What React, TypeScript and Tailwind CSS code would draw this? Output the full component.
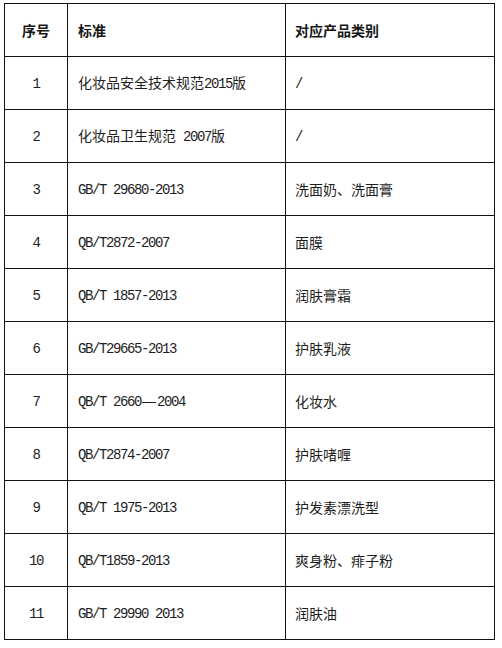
const ROWS: Array<[string, string, string]> = [
  ['1', '化妆品安全技术规范2015版', '/'],
  ['2', '化妆品卫生规范 2007版', '/'],
  ['3', 'GB/T 29680-2013', '洗面奶、洗面膏'],
  ['4', 'QB/T2872-2007', '面膜'],
  ['5', 'QB/T 1857-2013', '润肤膏霜'],
  ['6', 'GB/T29665-2013', '护肤乳液'],
  ['7', 'QB/T 2660—2004', '化妆水'],
  ['8', 'QB/T2874-2007', '护肤啫喱'],
  ['9', 'QB/T 1975-2013', '护发素漂洗型'],
  ['10', 'QB/T1859-2013', '爽身粉、痱子粉'],
  ['11', 'GB/T 29990 2013', '润肤油'],
];

// ascii runs get the narrow mono face, dashes a full em, the rest the CJK face
function Mixed({ text }: { text: string }) {
  const parts = text.match(/[\x00-\x7F]+|—+|[^\x00-\x7F—]+/g) ?? [];
  return (
    <span className="whitespace-pre">
      {parts.map((p, i) => {
        if (/^[\x00-\x7F]+$/.test(p))
          return (
            <span key={i} className="font-['Liberation_Mono',monospace] tracking-[-1.4px]">
              {p}
            </span>
          );
        if (p.startsWith('—'))
          return (
            <span key={i} className="font-['Liberation_Sans',sans-serif] px-px">
              {p}
            </span>
          );
        return <span key={i}>{p}</span>;
      })}
    </span>
  );
}

export default function App() {
  return (
    <div className="w-[502px] h-[648px] bg-white pt-[3px] pl-[4px] font-['Noto_Sans_CJK_SC',sans-serif] text-[14px] text-[#1e1e1e]">
      <div className="inline-grid grid-cols-[62px_217px_208px] auto-rows-[52px] gap-px bg-[#111] p-px">
        <div className="bg-white flex items-center justify-center font-bold text-[#161616]">序号</div>
        <div className="bg-white flex items-center pl-[10px] font-bold text-[#161616]">标准</div>
        <div className="bg-white flex items-center pl-[9px] font-bold text-[#161616]">对应产品类别</div>
        {ROWS.map(([no, std, cat]) => (
          <div key={no} className="contents">
            <div className="bg-white flex items-center justify-center">
              <Mixed text={no} />
            </div>
            <div className="bg-white flex items-center pl-[10px]">
              <Mixed text={std} />
            </div>
            <div className="bg-white flex items-center pl-[9px]">
              <Mixed text={cat} />
            </div>
          </div>
        ))}
      </div>
    </div>
  );
}
